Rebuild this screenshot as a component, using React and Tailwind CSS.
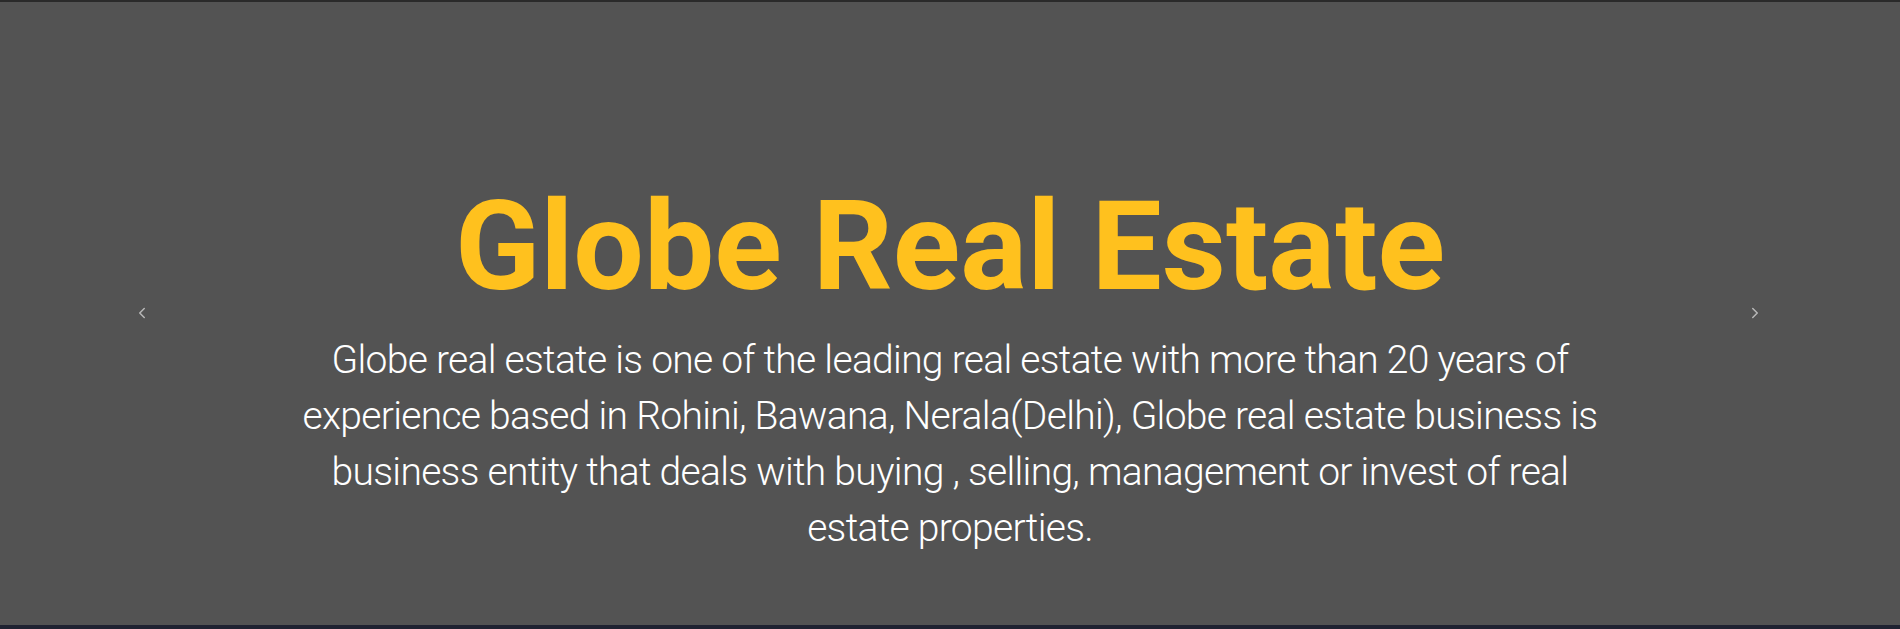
import { ChevronLeft, ChevronRight } from "lucide-react";

const App = () => {
  return (
    <div className="w-full h-[629px] bg-[#1f2231] flex flex-col" style={{ fontFamily: "Roboto, 'Liberation Sans', sans-serif" }}>
      {/* Top border */}
      <div className="h-[2px] bg-[#2a2a2a]" />

      {/* Hero slide */}
      <section className="relative h-[623px] bg-[#535353] flex flex-col items-center pt-[182px]">
        <button className="absolute left-[133px] top-[302px] text-[#b8b8b8]">
          <ChevronLeft size={18} strokeWidth={2} />
        </button>

        <h1 className="text-[125px] leading-none font-bold text-[#ffc11e]">
          Globe Real Estate
        </h1>

        <p className="mt-[23px] w-[1310px] text-center text-[39px] leading-[56px] tracking-[-0.7px] font-light text-white">
          Globe real estate is one of the leading real estate with more than 20 years of experience based in Rohini, Bawana, Nerala(Delhi), Globe real estate business is business entity that deals with buying , selling, management or invest of real estate properties.
        </p>

        <button className="absolute right-[136px] top-[302px] text-[#b8b8b8]">
          <ChevronRight size={18} strokeWidth={2} />
        </button>
      </section>
    </div>
  );
};

export default App;
